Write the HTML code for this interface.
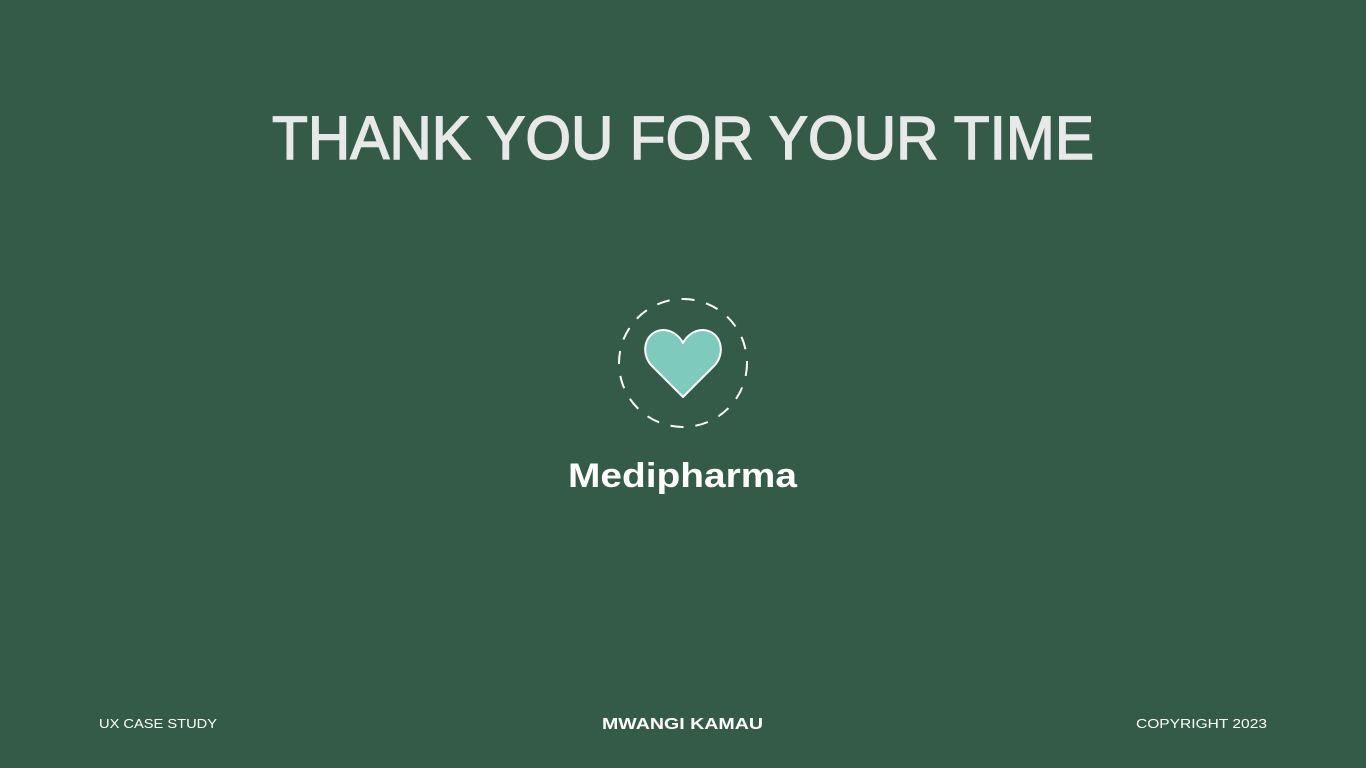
<!DOCTYPE html>
<html><head><meta charset="utf-8"><style>
html,body{margin:0;padding:0;background:#345b47;}
svg{display:block}
text{font-family:"Liberation Sans",sans-serif;}
</style></head><body>
<svg width="1366" height="768" viewBox="0 0 1366 768" xmlns="http://www.w3.org/2000/svg">
<rect width="1366" height="768" fill="#345b47"/>
<text x="272" y="159" font-size="61" fill="#e8e8e8" stroke="#e8e8e8" stroke-width="1.4" textLength="822" lengthAdjust="spacingAndGlyphs">THANK YOU FOR YOUR TIME</text>
<circle cx="683" cy="363" r="64" fill="none" stroke="#fff" stroke-width="2" stroke-dasharray="13 12"/>
<path d="M683 397 L652 366 C640 354 644 331 663 330 C673 330 680 337 683 343 C686 337 693 330 703 330 C722 331 726 354 714 366 Z" fill="#7ecbbd" stroke="#fff" stroke-width="2" stroke-linejoin="round"/>
<text x="568" y="487" font-size="34" font-weight="bold" fill="#fff" textLength="229" lengthAdjust="spacingAndGlyphs">Medipharma</text>
<text x="99" y="728" font-size="13" fill="#fff" textLength="118" lengthAdjust="spacingAndGlyphs">UX CASE STUDY</text>
<text x="602" y="729" font-size="16" font-weight="bold" fill="#fff" textLength="161" lengthAdjust="spacingAndGlyphs">MWANGI KAMAU</text>
<text x="1136" y="728" font-size="13" fill="#fff" textLength="131" lengthAdjust="spacingAndGlyphs">COPYRIGHT  2023</text>
</svg>
</body></html>
